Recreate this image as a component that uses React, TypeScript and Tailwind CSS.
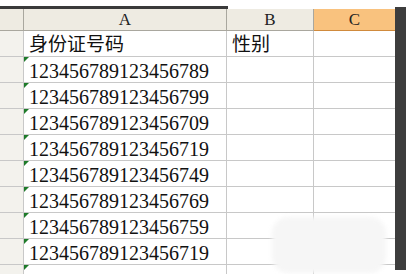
import React from "react";

const ids = [
  "123456789123456789",
  "123456789123456799",
  "123456789123456709",
  "123456789123456719",
  "123456789123456749",
  "123456789123456769",
  "123456789123456759",
  "123456789123456719",
];

const cell = "h-[26px] border-r border-b border-[#c8c8c8] shrink-0";

const Flag = () => (
  <span className="absolute left-0 top-0 w-0 h-0 border-t-[5px] border-r-[5px] border-t-[#1e7b2a] border-r-transparent" />
);

const App = () => {
  return (
    <div
      className="relative w-[406px] h-[274px] overflow-hidden bg-white flex"
      style={{ fontFamily: '"Liberation Serif", "Noto Sans CJK SC", serif' }}
    >
      <div className="w-[395px] flex flex-col shrink-0">
        <div className="h-[6px] shrink-0" />
        <div className="h-[3px] w-[228px] bg-[#3a3a3a] shrink-0" />
        {/* column headers */}
        <div className="flex shrink-0 h-[22px] bg-[#eeebe2] text-[17px] text-[#222] leading-[21px]">
          <div className="w-[24px] border-r border-b border-[#a9a79e] shrink-0" />
          <div className="w-[203px] border-r border-b border-[#a9a79e] text-center">A</div>
          <div className="w-[87px] border-r border-b border-[#a9a79e] text-center">B</div>
          <div className="w-[81px] border-b border-[#d08a3c] bg-[#f9c27e] text-center">C</div>
        </div>
        {/* title row */}
        <div className="flex shrink-0 text-[19px] text-[#111] leading-[26px]">
          <div className={`${cell} w-[24px] bg-[#f3f2ed]`} />
          <div className={`${cell} w-[203px] pl-[5px] pt-[1px]`}>身份证号码</div>
          <div className={`${cell} w-[87px] pl-[5px] pt-[1px]`}>性别</div>
          <div className={`${cell} w-[81px] border-r-0`} />
        </div>
        {ids.map((id, i) => (
          <div key={i} className="flex shrink-0 text-[20px] text-[#111] leading-[26px]">
            <div className={`${cell} w-[24px] bg-[#f3f2ed]`} />
            <div className={`${cell} relative w-[203px] pl-[5px] pt-[1px] overflow-hidden whitespace-nowrap`}>
              <Flag />
              {id}
            </div>
            <div className={`${cell} w-[87px]`} />
            <div className={`${cell} w-[81px] border-r-0`} />
          </div>
        ))}
        <div className="flex shrink-0">
          <div className="h-[26px] w-[24px] bg-[#f3f2ed] border-r border-[#c8c8c8]" />
          <div className="relative h-[26px] w-[203px] border-r border-[#c8c8c8]">
            <Flag />
          </div>
          <div className="h-[26px] w-[87px] border-r border-[#c8c8c8]" />
        </div>
      </div>
      <div className="mt-[7px] w-[11px] h-[263px] bg-[#3d3d3d] shrink-0" />
      <div className="absolute left-[272px] top-[217px] w-[114px] h-[56px] rounded-2xl bg-[#f6f6f6] blur-[2px]" />
    </div>
  );
};

export default App;
